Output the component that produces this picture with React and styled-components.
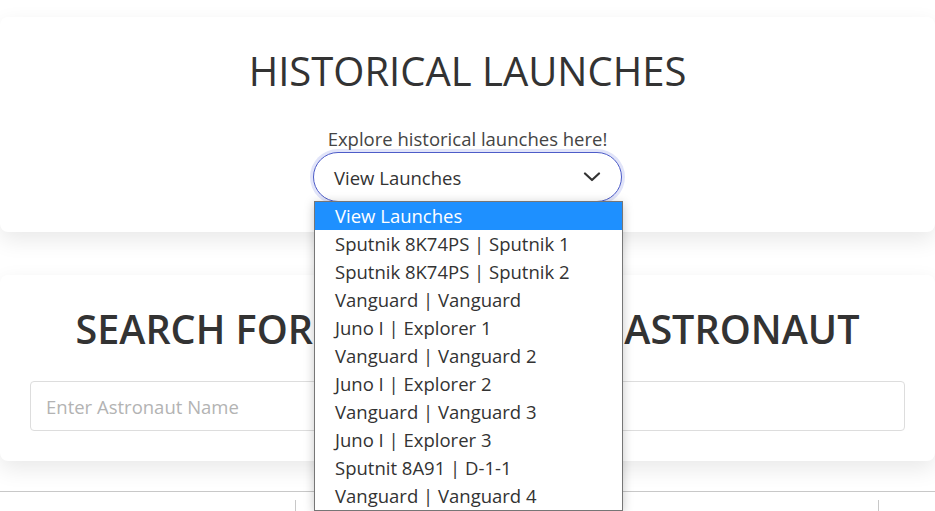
import React from 'react';
import styled, { createGlobalStyle } from 'styled-components';

const launches = [
    'View Launches',
    'Sputnik 8K74PS | Sputnik 1',
    'Sputnik 8K74PS | Sputnik 2',
    'Vanguard | Vanguard',
    'Juno I | Explorer 1',
    'Vanguard | Vanguard 2',
    'Juno I | Explorer 2',
    'Vanguard | Vanguard 3',
    'Juno I | Explorer 3',
    'Sputnit 8A91 | D-1-1',
    'Vanguard | Vanguard 4',
];

const GlobalStyle = createGlobalStyle`
    html, body {
        margin: 0;
        overflow: hidden;
        background: #fff;
        font-family: "Open Sans", "Noto Sans", sans-serif;
        color: #333;
    }
    * { box-sizing: border-box; }
`;

function App() {
    return (
        <>
            <GlobalStyle />
            <Page>
                {/* Historical launches card */}
                <Card>
                    <Title>HISTORICAL LAUNCHES</Title>
                    <Subtitle>Explore historical launches here!</Subtitle>
                    <SelectWrap>
                        <SelectBox>
                            <span>View Launches</span>
                            <svg width="18" height="10" viewBox="0 0 18 10">
                                <polyline points="2,1.5 9,8 16,1.5" fill="none" stroke="#333" strokeWidth="2.2" strokeLinecap="round" strokeLinejoin="round" />
                            </svg>
                        </SelectBox>
                        <OptionList>
                            {launches.map((name, i) => (
                                <Option key={name} $active={i === 0}>{name}</Option>
                            ))}
                        </OptionList>
                    </SelectWrap>
                </Card>

                {/* Astronaut search card */}
                <Card $search>
                    <Title $bold>
                        SEARCH FOR <TightWord>YOUR FAVORITE</TightWord> ASTRONAUT
                    </Title>
                    <SearchInput placeholder="Enter Astronaut Name" />
                </Card>

                <Table>
                    <HeadCell />
                    <HeadCell $divider />
                    <HeadCell $divider />
                </Table>
            </Page>
        </>
    );
}

const Page = styled.div`
    padding-top: 17px;
    display: flex;
    flex-direction: column;
    gap: 43px;
`;

const Card = styled.section`
    position: relative;
    z-index: ${(p) => (p.$search ? 1 : 2)};
    background: #fff;
    border-radius: 8px;
    box-shadow: 0 8px 22px rgba(0, 0, 0, 0.09);
    padding: 30px;
    display: flex;
    flex-direction: column;
    align-items: center;
`;

const Title = styled.h1`
    margin: 0 0 ${(p) => (p.$bold ? '28px' : '30px')};
    font-size: ${(p) => (p.$bold ? '39.5px' : '40px')};
    line-height: 48px;
    font-weight: ${(p) => (p.$bold ? 600 : 400)};
    color: #333;
    text-align: center;
    white-space: nowrap;
`;

const TightWord = styled.span`
    letter-spacing: -1px;
`;

const Subtitle = styled.p`
    margin: 0;
    font-size: 18.5px;
    line-height: 27px;
    color: #444;
`;

const SelectWrap = styled.div`
    position: relative;
    width: 309px;
`;

const SelectBox = styled.div`
    height: 50px;
    border: 1px solid #4d5cc8;
    border-radius: 25px;
    box-shadow: 0 0 0 3px rgba(90, 105, 220, 0.18);
    padding: 0 20px;
    display: flex;
    align-items: center;
    justify-content: space-between;
    font-size: 18.5px;
    color: #333;
    background: #fff;
`;

const OptionList = styled.ul`
    position: absolute;
    top: 49px;
    left: 1px;
    width: 309px;
    margin: 0;
    padding: 0;
    list-style: none;
    background: #fff;
    border: 1px solid #767676;
    box-shadow: 0 2px 10px rgba(0, 0, 0, 0.22);
`;

const Option = styled.li`
    height: 28px;
    line-height: 28px;
    padding-left: 20px;
    font-size: 18.5px;
    background: ${(p) => (p.$active ? '#1e90ff' : '#fff')};
    color: ${(p) => (p.$active ? '#fff' : '#333')};
    white-space: nowrap;
`;

const SearchInput = styled.input`
    width: 100%;
    height: 50px;
    border: 1px solid #ddd;
    border-radius: 4px;
    padding: 0 15px;
    font-family: inherit;
    font-size: 18.5px;
    color: #333;
    outline: none;

    &::placeholder {
        color: #b3b3b3;
    }
`;

const Table = styled.div`
    margin-top: -13px;
    border-top: 1px solid #c8c8c8;
    display: grid;
    grid-template-columns: 295px 583px 1fr;
    padding-top: 8px;
    height: 60px;
`;

const HeadCell = styled.div`
    border-left: ${(p) => (p.$divider ? '1px solid #c8c8c8' : 'none')};
`;

export default App;
